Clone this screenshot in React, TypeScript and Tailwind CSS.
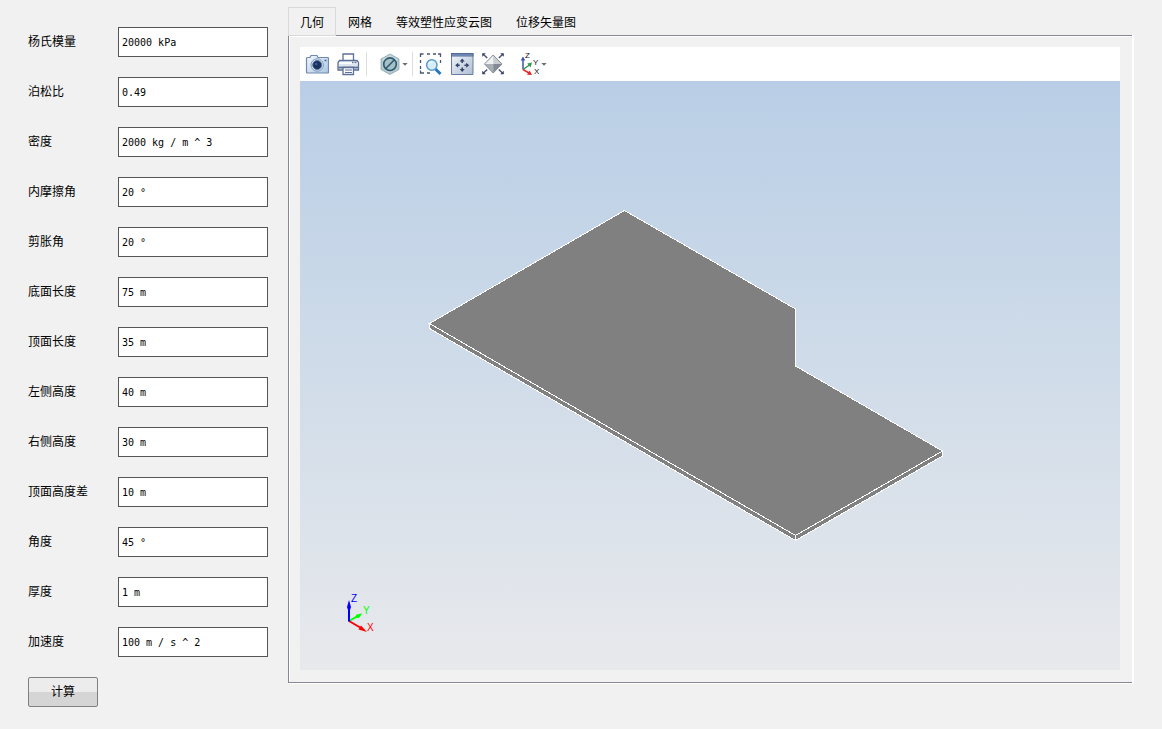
import { useState } from "react";

const fields = [
  { id: "young", label: "杨氏模量", value: "20000 kPa" },
  { id: "poisson", label: "泊松比", value: "0.49" },
  { id: "density", label: "密度", value: "2000 kg / m ^ 3" },
  { id: "friction", label: "内摩擦角", value: "20 °" },
  { id: "dilation", label: "剪胀角", value: "20 °" },
  { id: "bottomLength", label: "底面长度", value: "75 m" },
  { id: "topLength", label: "顶面长度", value: "35 m" },
  { id: "leftHeight", label: "左侧高度", value: "40 m" },
  { id: "rightHeight", label: "右侧高度", value: "30 m" },
  { id: "topDiff", label: "顶面高度差", value: "10 m" },
  { id: "angle", label: "角度", value: "45 °" },
  { id: "thickness", label: "厚度", value: "1 m" },
  { id: "acceleration", label: "加速度", value: "100 m / s ^ 2" },
];

const tabs = ["几何", "网格", "等效塑性应变云图", "位移矢量图"];

function CameraIcon() {
  return (
    <svg viewBox="0 0 24 24" className="w-6 h-6">
      <defs>
        <linearGradient id="cam" x1="0" y1="0" x2="1" y2="1">
          <stop offset="0" stopColor="#f4f9fd" />
          <stop offset="1" stopColor="#aac6e4" />
        </linearGradient>
      </defs>
      <path
        d="M1.500 6.500q0-1 1-1h2.500l1-2h6l1 2h9.500q1 0 1 1v13.500q0 1-1 1h-20q-1 0-1-1z"
        fill="url(#cam)"
        stroke="#7089b0"
        strokeWidth="1.200"
      />
      <circle cx="12.200" cy="13" r="6.200" fill="#dce9f5" stroke="#7f96b9" />
      <circle cx="12.200" cy="13" r="4.500" fill="#1b3260" stroke="#5c759f" />
      <circle cx="11.200" cy="12" r="1.300" fill="#3e5f96" />
      <path d="M19.500 8.500h2" stroke="#4a648f" strokeWidth="1.500" />
    </svg>
  );
}

function PrinterIcon() {
  return (
    <svg viewBox="0 0 24 24" className="w-6 h-6" stroke="#5d7098" strokeWidth="1.300">
      <path d="M7 9V2h10.500v7" fill="#fff" />
      <path d="M3.500 8.500h17.500l1.500 2v7.500h-20.500v-7.500z" fill="#dde5ef" />
      <path d="M3 11h18.500" stroke="#f8fbfe" strokeWidth="2" />
      <path d="M16 10.500h1.500M18.500 10.500h2" strokeWidth="1.300" />
      <path d="M2.500 15.500h19.500" strokeWidth="1.800" />
      <path d="M7 15.500h10.500v7h-10.500z" fill="#fff" />
      <path d="M9 18h7M9 20.500h7" strokeWidth="1.100" />
    </svg>
  );
}

function HexagonIcon() {
  return (
    <svg viewBox="0 0 24 24" className="w-6 h-6">
      <path d="M12 2l9 5v10.500l-9 5-9-5V7z" fill="#b5c9ce" stroke="#8ba5ab" strokeWidth="0.8" />
      <path d="M12 3l8 4.500L12 12 4 7.500z" fill="#cbdade" />
      <circle cx="12" cy="12.200" r="6.300" fill="#a6c0c7" stroke="#2c5b70" strokeWidth="1.600" />
      <path d="M7.600 16.700l8.800-9" stroke="#2c5b70" strokeWidth="1.600" />
    </svg>
  );
}

function ZoomBoxIcon() {
  return (
    <svg viewBox="0 0 24 24" className="w-6 h-6" fill="none">
      <path
        d="M1.500 5V2h3M8 2h3M14 2h3M19 2h2.500v3M21.500 8v3M1.500 8v3M1.500 14v3M1.500 18.500v2.500H5M8 21h3"
        stroke="#46547c"
        strokeWidth="1.300"
      />
      <path d="M16.500 17l5 5" stroke="#2577b8" strokeWidth="3" />
      <circle cx="12.800" cy="13" r="5.200" fill="#d9edf8" stroke="#559bcf" strokeWidth="1.500" />
      <path d="M10 12q1-2.500 3.500-2.500" stroke="#fff" />
    </svg>
  );
}

function FitIcon() {
  return (
    <svg viewBox="0 0 24 24" className="w-6 h-6">
      <defs>
        <linearGradient id="fit" x1="0" y1="0" x2="1" y2="1">
          <stop offset="0" stopColor="#f3f6fa" />
          <stop offset="1" stopColor="#aebed3" />
        </linearGradient>
      </defs>
      <path d="M1.500 1.500h21.500v21h-21.500z" fill="url(#fit)" stroke="#697da2" />
      <path d="M1 1h22.500v3.500h-22.500z" fill="#526b98" />
      <path d="M2 3h20.500" stroke="#8ea5ca" />
      <path
        d="M12.200 6.500l2.500 3h-5zM12.200 20l2.500-3h-5zM5.200 13.300l3-2.500v5zM19.200 13.300l-3-2.500v5z"
        fill="#34436c"
      />
      <path d="M12.200 9v2M12.200 15.500v2M7.500 13.300h2.300M14.500 13.300h2.300" stroke="#34436c" strokeWidth="1.500" />
    </svg>
  );
}

function DiamondIcon() {
  return (
    <svg viewBox="0 0 24 24" className="w-6 h-6">
      <path d="M12.200 3l-8.700 9h8.700z" fill="#eff0f2" />
      <path d="M12.200 3l8.700 9h-8.700z" fill="#c9ccd1" />
      <path d="M3.500 12l8.700 9v-9z" fill="#a9aeb6" />
      <path d="M20.900 12l-8.700 9v-9z" fill="#838a95" />
      <path d="M12.200 3l8.700 9-8.700 9-8.700-9z" fill="none" stroke="#848b96" />
      <path
        d="M2.500 2.500l3.700 3.500M21.500 2.500l-3.700 3.500M2.500 21l3.700-3.500M21.500 21l-3.700-3.500"
        stroke="#46557f"
        strokeWidth="1.500"
      />
      <path
        d="M1.200 1.200h3.600l-3.600 3.600zM22.800 1.200h-3.600l3.600 3.600zM1.200 22.300h3.600l-3.600-3.600zM22.800 22.300h-3.600l3.600-3.600z"
        fill="#34426b"
      />
    </svg>
  );
}

function AxesIcon() {
  return (
    <svg
      viewBox="0 0 22 24"
      className="w-[22px] h-6"
      fontFamily="Liberation Sans, sans-serif"
      fontSize="8"
      fill="#111"
    >
      <path d="M4 17.500V7" stroke="#3a56a8" strokeWidth="1.500" />
      <path d="M4 4.500l2.300 4h-4.600z" fill="#3a56a8" />
      <path d="M4 17.500l6.500-4.500" stroke="#2f9a50" strokeWidth="1.500" />
      <path d="M13 10.500l-1.500 5-3.200-4z" fill="#2f9a50" />
      <path d="M4 17.500l6 3.500" stroke="#e8282c" strokeWidth="1.500" />
      <path d="M13 23l-5-.2 2.700-4.300z" fill="#e8282c" />
      <text x="6" y="6">Z</text>
      <text x="14" y="13">Y</text>
      <text x="15" y="22">X</text>
    </svg>
  );
}

function Caret() {
  return (
    <svg viewBox="0 0 6 4" className="w-[6px] h-1">
      <path d="M.3 1h5.400l-2.700 2.700z" fill="#6e6e6e" />
    </svg>
  );
}

function Toolbar() {
  return (
    <div className="flex items-center h-[34px] pl-[5px] bg-white">
      <div className="flex gap-[7px]">
        <button type="button" aria-label="截图"><CameraIcon /></button>
        <button type="button" aria-label="打印"><PrinterIcon /></button>
      </div>
      <div className="w-px h-6 ml-[6px] bg-[#dcdcdc]" />
      <button type="button" aria-label="裁剪" className="flex items-center ml-[11px]">
        <HexagonIcon />
        <Caret />
      </button>
      <div className="w-px h-6 ml-1 bg-[#dcdcdc]" />
      <div className="flex gap-[7px] ml-[6px]">
        <button type="button" aria-label="框选缩放"><ZoomBoxIcon /></button>
        <button type="button" aria-label="适应窗口"><FitIcon /></button>
        <button type="button" aria-label="缩放全部"><DiamondIcon /></button>
      </div>
      <button type="button" aria-label="视图方向" className="flex items-center ml-[14px]">
        <AxesIcon />
        <Caret />
      </button>
    </div>
  );
}

function Scene() {
  return (
    <svg viewBox="0 0 820 589" className="block flex-1 w-full bg-linear-to-b from-[#b9cee6] via-[#d0dce9] to-[#e8e9ec]">
      {/* slab */}
      <g stroke="#fff" strokeWidth="1" fill="#808080" shapeRendering="crispEdges">
        <path d="M129.500 242.500L495.500 454.500L642.500 370V375L495.500 459.500L129.500 247.500z" />
        <path d="M324.500 129.500L495.500 228V285L642.500 370L495.500 454.500L129.500 242.500z" />
        <path d="M495.500 454.500V459.500" />
      </g>
      {/* triad */}
      <g strokeWidth="2" fontFamily="Liberation Sans, sans-serif" fontSize="10">
        <path d="M49 540l8-4.500" stroke="#0f0" />
        <path d="M62 532.500l-3 4.500-4-.5 1.500-3z" fill="#0f0" />
        <path d="M49 540l12 7" stroke="#f00" />
        <path d="M67 551l-8.500-2.500 2.500-4z" fill="#f00" />
        <path d="M49 540.500V526" stroke="#00f" />
        <path d="M49 519l2 7-1 3h-2l-1-3z" fill="#00f" />
        <text x="51" y="521" fill="#00f">Z</text>
        <text x="63" y="533" fill="#0f0">Y</text>
        <text x="67" y="550" fill="#f00">X</text>
      </g>
    </svg>
  );
}

export default function App() {
  const [active, setActive] = useState(0);

  return (
    <div className="flex min-h-screen pl-7 pr-7 gap-5 bg-[#f1f1f1] text-black text-xs font-['Liberation_Sans','Noto_Sans_CJK_SC',sans-serif]">
      <form className="flex flex-col gap-5 w-60 shrink-0 pt-[27px] pb-[22px]" onSubmit={(e) => e.preventDefault()}>
        {fields.map((f) => (
          <div key={f.id} className="flex items-center h-[30px]">
            <label htmlFor={f.id} className="w-[90px] shrink-0">
              {f.label}
            </label>
            <input
              id={f.id}
              type="text"
              defaultValue={f.value}
              className="flex-1 min-w-0 h-full px-[3px] bg-white border border-[#555] text-[10px] font-['DejaVu_Sans_Mono',monospace]"
            />
          </div>
        ))}
        <button
          type="submit"
          className="w-[70px] h-[30px] rounded-[2px] border border-[#808080] bg-linear-to-b from-[#ececec] from-50% to-[#d5d5d5] to-50%"
        >
          计算
        </button>
      </form>

      <main className="flex flex-col flex-1 min-w-0 pt-[7px] pb-[45px]">
        <div role="tablist" className="relative flex -mb-px">
          {tabs.map((t, i) => (
            <button
              key={t}
              type="button"
              role="tab"
              aria-selected={i === active}
              onClick={() => setActive(i)}
              className={`h-[29px] px-[11px] pt-0.5 border ${
                i === active ? "bg-[#f1f1f1] border-[#d9d9d9]" : "border-transparent"
              }`}
            >
              {t}
            </button>
          ))}
        </div>
        <div className="flex flex-col flex-1 border-r-2 border-b border-white">
          <div className="flex flex-col flex-1 border-l border-t border-b border-[#868894]">
            <div className="flex flex-col flex-1 pl-[10px] pt-[10px] pr-3 pb-3 border-l border-t border-white">
              <Toolbar />
              <Scene />
            </div>
          </div>
        </div>
      </main>
    </div>
  );
}
